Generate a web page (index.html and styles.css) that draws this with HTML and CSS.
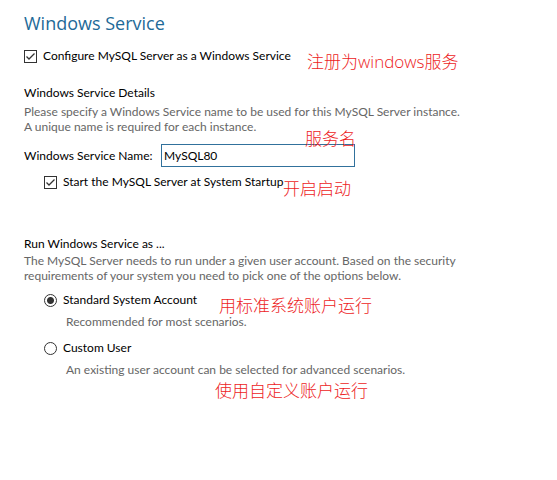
FILE: index.html
```html
<!DOCTYPE html>
<html lang="en">
<head>
<meta charset="utf-8">
<title>Windows Service</title>
<link rel="stylesheet" href="styles.css">
</head>
<body>
<main class="page">
  <h1 class="title">Windows Service</h1>
  <div class="row">
    <input class="check" type="checkbox" id="configure" checked>
    <label for="configure">Configure MySQL Server as a Windows Service</label>
    <span class="note note-register" lang="zh">注册为windows服务</span>
  </div>

  <section class="details">
    <h2 class="heading">Windows Service Details</h2>
    <p class="hint">Please specify a Windows Service name to be used for this MySQL Server instance.<br>A unique name is required for each instance.</p>
    <div class="row field">
      <label class="field-label" for="name">Windows Service Name:</label>
      <input class="text" type="text" id="name" value="MySQL80">
      <span class="note note-name" lang="zh">服务名</span>
    </div>
    <div class="row indent">
      <input class="check" type="checkbox" id="startup" checked>
      <label for="startup">Start the MySQL Server at System Startup</label>
      <span class="note note-startup" lang="zh">开启启动</span>
    </div>
  </section>

  <section class="account">
    <h2 class="heading">Run Windows Service as ...</h2>
    <p class="hint">The MySQL Server needs to run under a given user account. Based on the security<br>requirements of your system you need to pick one of the options below.</p>
    <div class="row indent option">
      <input class="radio" type="radio" name="account" id="standard" checked>
      <label for="standard">Standard System Account</label>
      <span class="note note-standard" lang="zh">用标准系统账户运行</span>
    </div>
    <p class="hint option-hint">Recommended for most scenarios.</p>
    <div class="row indent option">
      <input class="radio" type="radio" name="account" id="custom">
      <label for="custom">Custom User</label>
    </div>
    <p class="hint option-hint">An existing user account can be selected for advanced scenarios.</p>
    <p class="note note-custom" lang="zh">使用自定义账户运行</p>
  </section>
</main>
</body>
</html>
```
FILE: styles.css
```css
* { box-sizing: border-box; }
body {
  margin: 0;
  background: #fff;
  color: #000;
  font: 12px/16px Lato, "Noto Sans CJK SC", sans-serif;
}
h1, h2, p { margin: 0; font-weight: 400; }
.page { min-height: 100vh; padding: 11px 24px; }
.title { font-family: "Open Sans", sans-serif; font-size: 18px; line-height: 24px; color: #1e6a98; }
.row {
  position: relative;
  display: flex;
  align-items: center;
  gap: 6px;
  height: 16px;
  white-space: nowrap;
}
.title + .row { margin-top: 13px; }
.details { margin-top: 21px; }
.account { margin-top: 46px; }
.heading { font-size: 12px; line-height: 16px; margin-bottom: 3px; }
.account .heading { margin-bottom: 1px; }
.hint { color: #666; line-height: 15px; white-space: nowrap; }
.field { height: 23px; margin: 10px 0 7px; }
.field-label { width: 131px; }
.text {
  width: 194px;
  height: 23px;
  padding: 0 2px;
  border: 1px solid #31719c;
  border-radius: 0;
  background: #fff;
  color: #000;
  font: inherit;
  outline: none;
}
.indent { margin-left: 20px; }
.check, .radio {
  appearance: none;
  flex: none;
  width: 13px;
  height: 13px;
  margin: 0;
  border: 1px solid #333;
  background: #fff;
}
.check:checked {
  background: url("data:image/svg+xml,%3Csvg xmlns='http://www.w3.org/2000/svg' viewBox='0 0 11 11'%3E%3Cpath d='M1.5 5.5l2.5 2.5L9.5 2.5' fill='none' stroke='%23333' stroke-width='1.3'/%3E%3C/svg%3E");
}
.radio { border-radius: 50%; }
.radio:checked { background: radial-gradient(circle, #333 3px, #fff 4px); }
.option { margin-top: 9px; }
.option-hint { margin: 6px 0 0 42px; }
.option-hint + .option { margin-top: 11px; }
.note {
  position: absolute;
  color: #ed1c24;
  font-size: 17px;
  font-weight: 300;
  line-height: 24px;
  font-family: "Open Sans", "Noto Sans CJK SC", sans-serif;
  pointer-events: none;
}
.note-register { left: 283px; top: 2px; }
.note-name { left: 281px; top: -17px; }
.note-startup { left: 239px; top: 3px; }
.note-standard { left: 175px; top: 2px; }
.note-custom { position: static; margin: 2px 0 0 191px; }
```
